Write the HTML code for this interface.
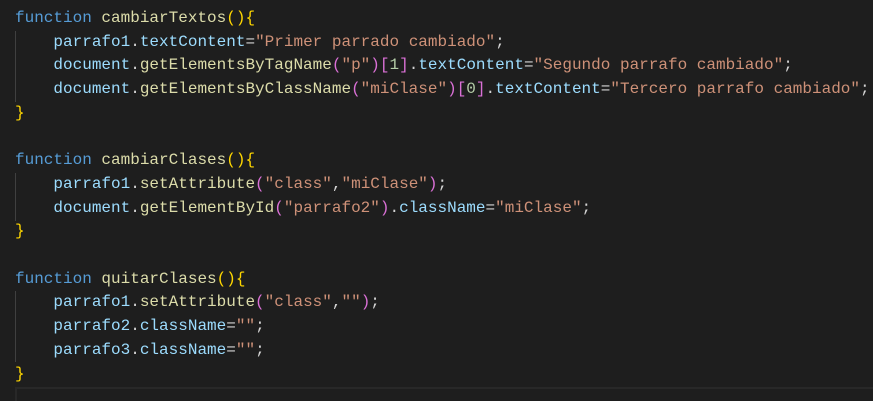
<!DOCTYPE html>
<html style="overflow:hidden"><head><style>
html,body{margin:0;background:#1e1e1e;width:873px;height:401px;overflow:hidden;position:relative}
pre{margin:0;position:absolute;left:15px;top:7px;font-family:"Liberation Mono",monospace;font-size:16px;line-height:23.7px;color:#d4d4d4}
.k{color:#569cd6}.f{color:#dcdcaa}.v{color:#9cdcfe}.s{color:#ce9178}.n{color:#b5cea8}.b1{color:#ffd700}.b2{color:#da70d6}
.g{position:absolute;left:15px;width:1px;background:#404040}
.cl{position:absolute;left:15px;right:0;top:387px;height:23px;border:2px solid #282828;border-right:none}
</style></head><body>
<div class="g" style="top:31px;height:71px"></div>
<div class="g" style="top:173px;height:48px"></div>
<div class="g" style="top:291px;height:71px"></div>
<div class="cl"></div>
<pre><span class="k">function</span> <span class="f">cambiarTextos</span><span class="b1">(){</span>
    <span class="v">parrafo1</span>.<span class="v">textContent</span>=<span class="s">"Primer parrado cambiado"</span>;
    <span class="v">document</span>.<span class="f">getElementsByTagName</span><span class="b2">(</span><span class="s">"p"</span><span class="b2">)[</span><span class="n">1</span><span class="b2">]</span>.<span class="v">textContent</span>=<span class="s">"Segundo parrafo cambiado"</span>;
    <span class="v">document</span>.<span class="f">getElementsByClassName</span><span class="b2">(</span><span class="s">"miClase"</span><span class="b2">)[</span><span class="n">0</span><span class="b2">]</span>.<span class="v">textContent</span>=<span class="s">"Tercero parrafo cambiado"</span>;
<span class="b1">}</span>

<span class="k">function</span> <span class="f">cambiarClases</span><span class="b1">(){</span>
    <span class="v">parrafo1</span>.<span class="f">setAttribute</span><span class="b2">(</span><span class="s">"class"</span>,<span class="s">"miClase"</span><span class="b2">)</span>;
    <span class="v">document</span>.<span class="f">getElementById</span><span class="b2">(</span><span class="s">"parrafo2"</span><span class="b2">)</span>.<span class="v">className</span>=<span class="s">"miClase"</span>;
<span class="b1">}</span>

<span class="k">function</span> <span class="f">quitarClases</span><span class="b1">(){</span>
    <span class="v">parrafo1</span>.<span class="f">setAttribute</span><span class="b2">(</span><span class="s">"class"</span>,<span class="s">""</span><span class="b2">)</span>;
    <span class="v">parrafo2</span>.<span class="v">className</span>=<span class="s">""</span>;
    <span class="v">parrafo3</span>.<span class="v">className</span>=<span class="s">""</span>;
<span class="b1">}</span></pre>
</body></html>
